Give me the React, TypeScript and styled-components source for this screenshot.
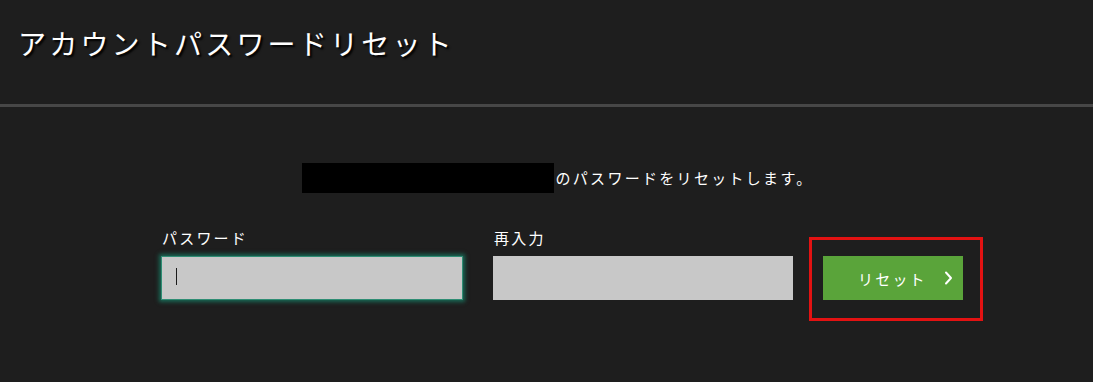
import React from 'react';
import styled, { createGlobalStyle } from 'styled-components';

const GlobalStyle = createGlobalStyle`
  html, body {
    margin: 0;
    padding: 0;
    background: #1e1e1e;
  }
  body {
    font-family: "Noto Sans CJK JP", "Noto Sans", sans-serif;
    color: #ffffff;
  }
`;

const Page = styled.div`
  width: 1093px;
  height: 382px;
  background: #1e1e1e;
  overflow: hidden;
`;

const Header = styled.header`
  height: 107px;
  box-sizing: border-box;
  padding: 24px 0 0 18px;
  border-bottom: 3px solid #474747;
`;

const Title = styled.h1`
  margin: 0;
  font-size: 28px;
  line-height: 38px;
  font-weight: 400;
  letter-spacing: 3.2px;
  color: #ffffff;
  text-shadow: 2px 2px 2px #000000;
`;

const Main = styled.main`
  padding-top: 56px;
`;

const Message = styled.p`
  margin: 0;
  padding-left: 23px;
  text-align: center;
  font-size: 15px;
  line-height: 30px;
  letter-spacing: 2.3px;
  color: #ffffff;
`;

const Masked = styled.span`
  display: inline-block;
  width: 252px;
  height: 30px;
  background: #000000;
  vertical-align: top;
  margin-right: 1px;
`;

const FormRow = styled.form`
  display: flex;
  align-items: flex-start;
  margin-top: 35px;
  padding-left: 161px;
`;

const Field = styled.label<{ $gap?: number }>`
  display: flex;
  flex-direction: column;
  gap: 8px;
  margin-right: ${(p) => p.$gap ?? 0}px;
`;

const LabelText = styled.span`
  font-size: 15px;
  line-height: 20px;
  letter-spacing: 2.2px;
  color: #ffffff;
  padding-left: 1px;
`;

const InputWrap = styled.div`
  position: relative;
`;

const Caret = styled.span`
  position: absolute;
  left: 15px;
  top: 12px;
  width: 1px;
  height: 17px;
  background: #1a1a1a;
  pointer-events: none;
`;

const TextInput = styled.input<{ $width: number; $focused?: boolean }>`
  display: block;
  width: ${(p) => p.$width}px;
  height: 44px;
  box-sizing: border-box;
  padding: 0 14px;
  border: ${(p) => (p.$focused ? '1px solid #2f8d74' : '0')};
  background: #c8c8c8;
  font-size: 15px;
  color: #222;
  caret-color: ${(p) => (p.$focused ? 'transparent' : '#222')};
  outline: none;
  box-shadow: ${(p) =>
    p.$focused ? '0 0 4px 2px rgba(24, 130, 104, 0.75)' : 'none'};
`;

const Highlight = styled.div`
  margin-top: 9px;
  margin-left: 16px;
  border: 3px solid #e31212;
  padding: 16px 17px 18px 11px;
`;

const ResetButton = styled.button`
  display: flex;
  align-items: center;
  width: 140px;
  height: 44px;
  box-sizing: border-box;
  padding: 0 0 0 35px;
  border: none;
  background: #5aa43a;
  color: #ffffff;
  font-family: "Noto Sans CJK JP", "Noto Sans", sans-serif;
  font-size: 15px;
  letter-spacing: 2.2px;
  cursor: pointer;

  svg {
    margin-left: 17px;
  }
`;

const Chevron = () => (
  <svg width="9" height="14" viewBox="0 0 9 14" aria-hidden="true">
    <path d="M2 1.5 L7 7 L2 12.5" fill="none" stroke="#ffffff" strokeWidth="2" strokeLinecap="round" strokeLinejoin="round" />
  </svg>
);

const App: React.FC = () => {
  return (
    <Page>
      <GlobalStyle />
      <Header>
        <Title>アカウントパスワードリセット</Title>
      </Header>
      <Main>
        <Message>
          <Masked />
          のパスワードをリセットします。
        </Message>
        <FormRow onSubmit={(e) => e.preventDefault()}>
          <Field $gap={30}>
            <LabelText>パスワード</LabelText>
            <InputWrap>
              <TextInput type="password" $width={302} $focused autoFocus />
              <Caret />
            </InputWrap>
          </Field>
          <Field>
            <LabelText>再入力</LabelText>
            <TextInput type="password" $width={300} />
          </Field>
          <Highlight>
            <ResetButton type="submit">
              リセット
              <Chevron />
            </ResetButton>
          </Highlight>
        </FormRow>
      </Main>
    </Page>
  );
};

export default App;
